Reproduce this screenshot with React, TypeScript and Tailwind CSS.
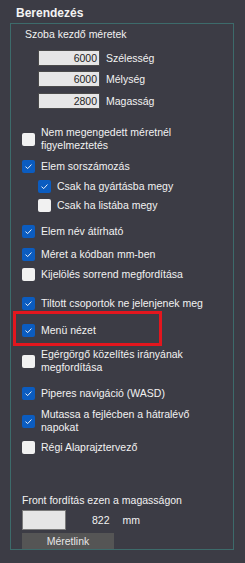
import React from 'react';

type CheckProps = {
  checked?: boolean;
  label: React.ReactNode;
  nested?: boolean;
  className?: string;
};

function Box({ checked }: { checked?: boolean }) {
  if (checked) {
    return (
      <span className="flex h-[13px] w-[13px] shrink-0 items-center justify-center rounded-[2px] bg-[#0b5cc0]">
        <svg width="13" height="13" viewBox="0 0 13 13" fill="none">
          <path d="M3.8 6.9 L5.7 8.6 L9.2 4.8" stroke="#e8eef8" strokeWidth="1" strokeLinecap="round" strokeLinejoin="round" />
        </svg>
      </span>
    );
  }
  return <span className="h-[13px] w-[13px] shrink-0 rounded-[2px] bg-[#f1f1f1]" />;
}

function Check({ checked, label, nested, className = '' }: CheckProps) {
  return (
    <div className={`flex items-center gap-[6px] ${nested ? 'ml-[27px]' : 'ml-[11px]'} ${className}`}>
      <Box checked={checked} />
      <span className="leading-[13px] text-[#f2f2f2]">{label}</span>
    </div>
  );
}

function SizeRow({ value, label, className = '' }: { value: string; label: string; className?: string }) {
  return (
    <div className={`ml-[27px] flex items-center gap-[6px] ${className}`}>
      <div className="flex h-[16px] w-[62px] items-center justify-end border border-[#4a4a4a] bg-[#e6e6e6] pr-[2px] leading-[13px] text-[#1e1e1e]">
        {value}
      </div>
      <span className="leading-[13px] text-[#f2f2f2]">{label}</span>
    </div>
  );
}

export default function App() {
  return (
    <div
      className="relative h-[563px] w-[245px] overflow-hidden bg-[#3c3c45] text-[10.5px]"
      style={{ fontFamily: '"Liberation Sans", Arial, sans-serif' }}
    >
      <div className="h-[23px] pl-[16px] pt-[6px] text-[12px] font-bold leading-[14px] text-[#f4f4f4]">Berendezés</div>

      <div className="ml-[10px] h-[527px] w-[224px] border border-[#3d6b6b]">
        <div className="pl-[14px] pt-[4px] leading-[13px] text-[#f2f2f2]">Szoba kezdő méretek</div>

        <SizeRow value="6000" label="Szélesség" className="mt-[9px]" />
        <SizeRow value="6000" label="Mélység" className="mt-[5px]" />
        <SizeRow value="2800" label="Magasság" className="mt-[6px]" />

        <Check className="mt-[17px]" label={<>Nem megengedett méretnél<br />figyelmeztetés</>} />
        <Check className="mt-[8px]" checked label="Elem sorszámozás" />
        <Check className="mt-[7px]" nested checked label="Csak ha gyártásba megy" />
        <Check className="mt-[6px]" nested label="Csak ha listába megy" />
        <Check className="mt-[13px]" checked label="Elem név átírható" />
        <Check className="mt-[10px]" checked label="Méret a kódban mm-ben" />
        <Check className="mt-[7px]" label="Kijelölés sorrend megfordítása" />
        <Check className="mt-[16px]" checked label="Tiltott csoportok ne jelenjenek meg" />
        <Check className="mt-[14px]" checked label="Menü nézet" />
        <Check className="mt-[11px]" label={<>Egérgörgő közelítés irányának<br />megfordítása</>} />
        <Check className="mt-[13px]" checked label="Piperes navigáció (WASD)" />
        <Check className="mt-[8px]" checked label={<>Mutassa a fejlécben a hátralévő<br />napokat</>} />
        <Check className="mt-[7px]" label="Régi Alaprajztervező" />

        <div className="mt-[40px] pl-[11px] leading-[13px] text-[#f2f2f2]">Front fordítás ezen a magasságon</div>
        <div className="ml-[11px] mt-[3px] flex items-center">
          <div className="h-[20px] w-[44px] border border-[#7a7a7a] bg-[#e6e6e6]" />
          <span className="ml-[26px] leading-[13px] text-[#f2f2f2]">822</span>
          <span className="ml-[13px] leading-[13px] text-[#f2f2f2]">mm</span>
        </div>
        <div className="ml-[11px] mt-[3px] flex h-[16px] w-[92px] items-center justify-center bg-[#555555] leading-[13px] text-[#e6e6e6]">
          Méretlink
        </div>
      </div>

      <div className="absolute left-[13px] top-[311px] h-[35px] w-[149px] border-[3px] border-[#e3161e]" />
    </div>
  );
}
